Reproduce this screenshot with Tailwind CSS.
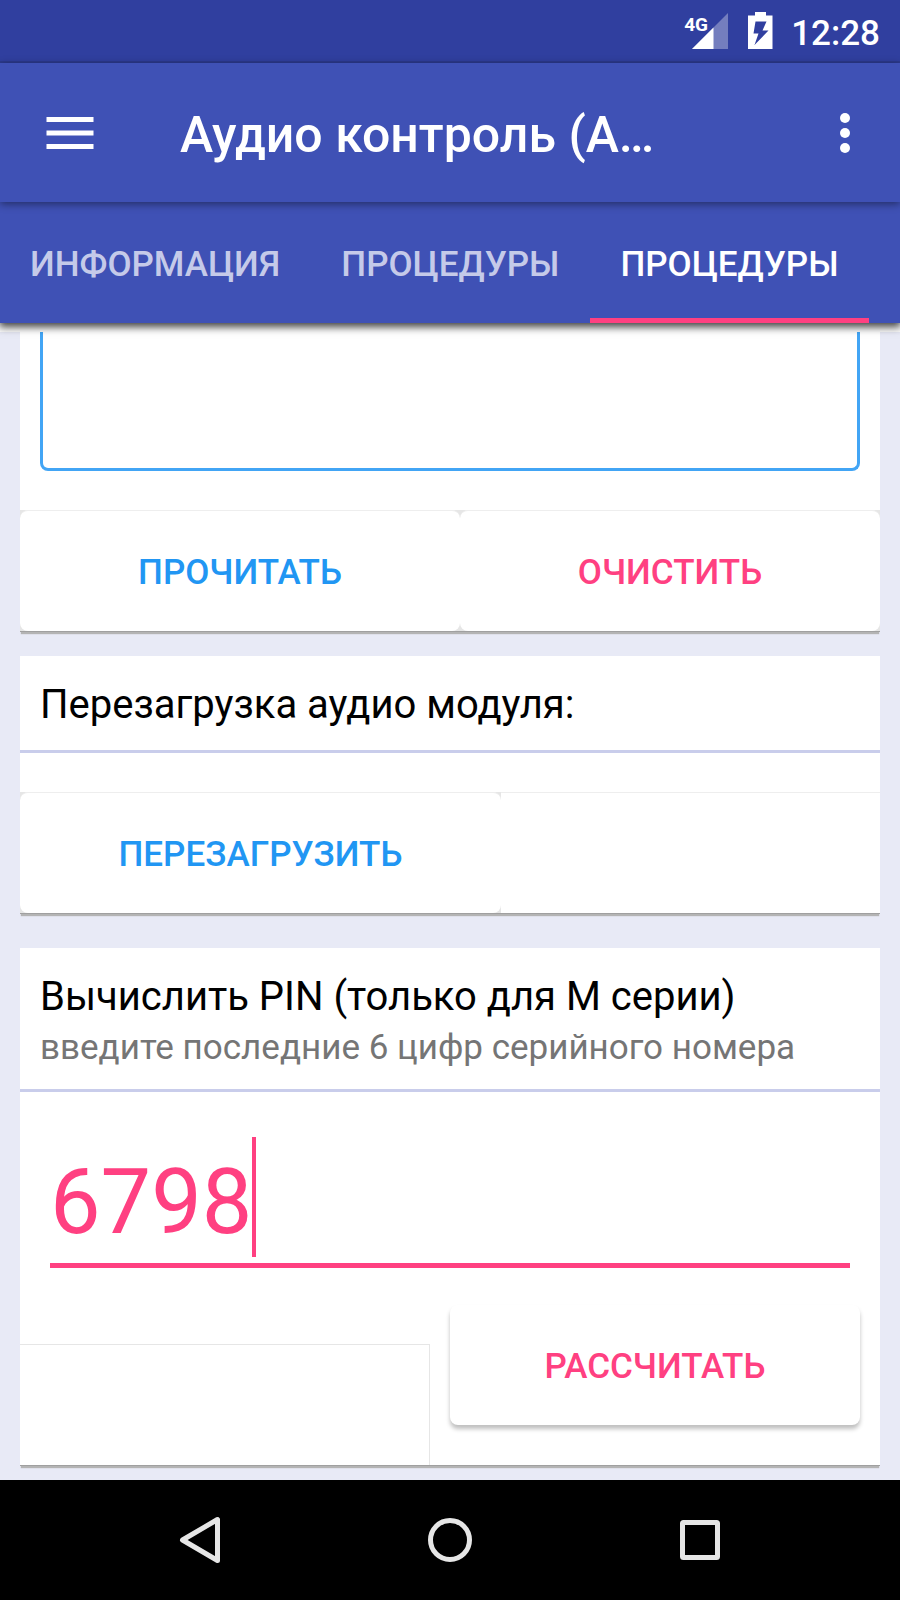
<!DOCTYPE html>
<html lang="ru">
<head>
<meta charset="utf-8">
<meta name="viewport" content="width=device-width, initial-scale=1">
<title>Аудио контроль</title>
<script src="https://cdn.jsdelivr.net/npm/@tailwindcss/browser@4"></script>
</head>
<body class="flex min-h-screen flex-col bg-[#e8eaf6] font-['Roboto','Liberation_Sans',sans-serif] text-black">

<header class="relative z-10 bg-[#3f51b5] text-white shadow-[0_3px_8px_1px_rgba(0,0,0,0.75)]">
  <!-- Status bar -->
  <div class="flex h-[63px] items-center justify-end border-b-2 border-[#2c3a8e] bg-[#303f9f] pr-5">
    <div class="relative mr-5 h-9 w-11">
      <span class="absolute top-1 left-0 text-[19px] leading-4 font-bold">4G</span>
      <svg class="absolute right-0 bottom-0 h-9 w-9" viewBox="0 0 36 36" aria-hidden="true">
        <path d="M36 0V36H0Z" fill="#fff" fill-opacity=".33"/>
        <path d="M21.500 14.500V36H0Z" fill="#fff"/>
      </svg>
    </div>
    <svg class="mr-[18px] h-[37px] w-[25px]" viewBox="0 0 25 37" role="img" aria-label="Зарядка">
      <path fill="#fff" fill-rule="evenodd" d="M7 0H18V3.500H24.500V37H0V3.500H7ZM7.500 9.500L5.500 21.500H10.500L6.500 33L20.500 18.500H14.500L18.500 9.500Z"/>
    </svg>
    <time class="pt-1.5 text-[35px] leading-10 font-medium">12:28</time>
  </div>

  <!-- Toolbar -->
  <div class="relative z-10 flex h-[139px] items-center bg-[#3f51b5] pr-[40px] pl-[46px] shadow-[0_2px_8px_rgba(0,0,0,0.45)]">
    <button type="button" aria-label="Меню" class="shrink-0">
      <svg class="block h-8 w-12" viewBox="0 0 48 32" fill="#fff" aria-hidden="true"><path d="M0.500 0H47.500V5H0.500ZM0.500 13.500H47.500V18.500H0.500ZM0.500 27H47.500V32H0.500Z"/></svg>
    </button>
    <h1 class="ml-[86px] flex-1 truncate pt-1 text-[50px] leading-[60px] font-medium">Аудио контроль (А…</h1>
    <button type="button" aria-label="Ещё" class="shrink-0">
      <svg class="block h-10 w-[30px]" viewBox="0 0 30 40" fill="#fff" aria-hidden="true"><circle cx="15" cy="5" r="5"/><circle cx="15" cy="20" r="5"/><circle cx="15" cy="35" r="5"/></svg>
    </button>
  </div>

  <!-- Tabs -->
  <nav class="flex h-[121px] gap-px text-[35px] leading-10 font-medium">
    <a href="#info" class="flex items-center border-b-5 border-transparent px-[30px] pt-2.5 text-[#c5cae9]">ИНФОРМАЦИЯ</a>
    <a href="#proc1" class="flex items-center border-b-5 border-transparent px-[30px] pt-2.5 text-[#c5cae9]">ПРОЦЕДУРЫ</a>
    <a href="#proc2" aria-current="page" class="flex items-center border-b-5 border-[#ff4081] px-[30px] pt-2.5">ПРОЦЕДУРЫ</a>
  </nav>
</header>

<main class="flex-1 border-t-9 border-white px-5 text-[35px] leading-10">
  <section class="bg-white shadow-[0_3px_1px_-1px_#b4b4b4]">
    <div class="px-5 pb-[39px]">
      <textarea aria-label="Результат" class="block h-[139px] w-full resize-none rounded-b-lg border-3 border-t-0 border-[#42a5f5] bg-transparent p-4 outline-none"></textarea>
    </div>
    <div class="flex border-b border-[#a0a0a0] bg-[#e6e6e6]">
      <button type="button" class="w-[440px] rounded-lg border-t border-[#eee] bg-white pt-[42px] pb-[38px] font-medium text-[#2196f3]">ПРОЧИТАТЬ</button>
      <button type="button" class="flex-1 rounded-lg border-t border-[#eee] bg-white pt-[42px] pb-[38px] font-medium text-[#ff4081]">ОЧИСТИТЬ</button>
    </div>
  </section>

  <section class="mt-6 bg-white shadow-[0_3px_1px_-1px_#b4b4b4]">
    <h2 class="border-b-3 border-[#c9cdeb] px-5 pt-[25px] pb-[21px] text-[40px] leading-12">Перезагрузка аудио модуля:</h2>
    <div class="mt-[39px] flex border-b border-[#a0a0a0] bg-[#e6e6e6]">
      <button type="button" class="w-[481px] rounded-lg border-t border-[#eee] bg-white pt-[42px] pb-[38px] font-medium text-[#2196f3]">ПЕРЕЗАГРУЗИТЬ</button>
      <div class="flex-1 border-t border-[#eee] bg-white"></div>
    </div>
  </section>

  <section class="mt-[34px] bg-white shadow-[0_3px_1px_-1px_#b4b4b4]">
    <div class="border-b-3 border-[#c9cdeb] px-5 pt-[25px] pb-[21px]">
      <h2 class="text-[40px] leading-12">Вычислить PIN (только для М серии)</h2>
      <label for="pin" class="block pt-[7px] text-[#757575]">введите последние 6 цифр серийного номера</label>
    </div>
    <div class="relative px-[30px] pt-[38px]">
      <input id="pin" type="text" inputmode="numeric" value="6798" class="block h-[138px] w-full border-b-5 border-[#ff4081] bg-transparent pt-3 text-[90px] leading-[120px] text-[#ff4081] outline-none">
      <span class="absolute top-[45px] left-[232px] h-[120px] w-1 bg-[#ff4081]"></span>
    </div>
    <div class="grid grid-cols-2 items-start gap-5 border-b border-[#a0a0a0] pr-5">
      <div class="mt-[76px] h-[121px] border-t border-r border-[#e6e6e6]"></div>
      <button type="button" class="mt-[37px] rounded-lg bg-white pt-[42px] pb-[38px] font-medium text-[#ff4081] shadow-[0_4px_4px_rgba(0,0,0,0.25)]">РАССЧИТАТЬ</button>
    </div>
  </section>
</main>

<!-- System navigation -->
<footer class="mt-auto flex h-[120px] justify-center bg-black">
  <button type="button" aria-label="Назад" class="flex w-[250px] items-center justify-center"><svg class="h-12 w-[42px]" viewBox="0 0 42 48" fill="none" stroke="#e6e6e6" stroke-width="5" stroke-linejoin="round" aria-hidden="true"><path d="M38.500 3.500V44.500L3.500 24Z"/></svg></button>
  <button type="button" aria-label="Домой" class="flex w-[250px] items-center justify-center"><svg class="h-11 w-11" viewBox="0 0 44 44" fill="none" stroke="#e6e6e6" stroke-width="5" aria-hidden="true"><circle cx="22" cy="22" r="19.500"/></svg></button>
  <button type="button" aria-label="Недавние" class="flex w-[250px] items-center justify-center"><svg class="h-10 w-10" viewBox="0 0 40 40" fill="none" stroke="#e6e6e6" stroke-width="5" aria-hidden="true"><rect x="2.500" y="2.500" width="35" height="35" rx="1"/></svg></button>
</footer>
</body>
</html>
